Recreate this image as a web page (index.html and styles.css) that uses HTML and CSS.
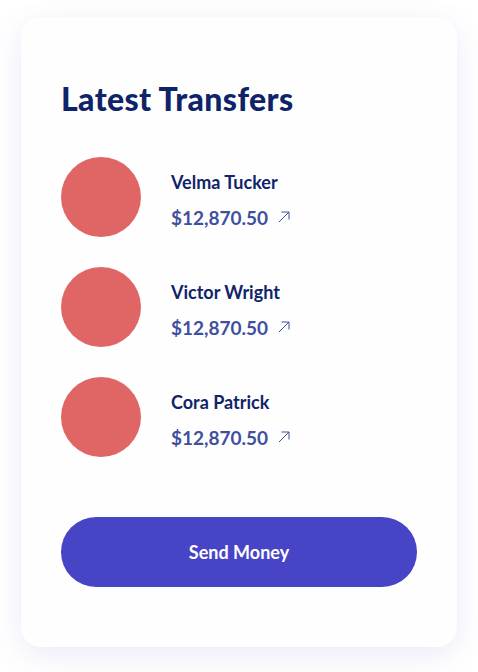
FILE: index.html
```html
<!DOCTYPE html>
<html lang="en">
<head>
<meta charset="utf-8">
<title>Latest Transfers</title>
<link rel="stylesheet" href="styles.css">
</head>
<body>
<main class="card">
  <h1 class="title">Latest Transfers</h1>
  <ul class="list">
    <li class="row">
      <span class="avatar"></span>
      <div class="info">
        <span class="name">Velma Tucker</span>
        <span class="amount">$12,870.50
          <svg class="arrow" viewBox="0 0 12 12" width="12" height="12"><path d="M1 11 L11 1 M3.5 1 H11 V8.5" fill="none" stroke="currentColor" stroke-width="1"/></svg>
        </span>
      </div>
    </li>
    <li class="row">
      <span class="avatar"></span>
      <div class="info">
        <span class="name">Victor Wright</span>
        <span class="amount">$12,870.50
          <svg class="arrow" viewBox="0 0 12 12" width="12" height="12"><path d="M1 11 L11 1 M3.5 1 H11 V8.5" fill="none" stroke="currentColor" stroke-width="1"/></svg>
        </span>
      </div>
    </li>
    <li class="row">
      <span class="avatar"></span>
      <div class="info">
        <span class="name">Cora Patrick</span>
        <span class="amount">$12,870.50
          <svg class="arrow" viewBox="0 0 12 12" width="12" height="12"><path d="M1 11 L11 1 M3.5 1 H11 V8.5" fill="none" stroke="currentColor" stroke-width="1"/></svg>
        </span>
      </div>
    </li>
  </ul>
  <button class="send" type="button">Send Money</button>
</main>
</body>
</html>
```
FILE: styles.css
```css
html, body {
  margin: 0;
  padding: 0;
  background: #ffffff;
}
body {
  font-family: "Lato", "Noto Sans", sans-serif;
  padding: 17px 21px 25px;
}
.card {
  box-sizing: border-box;
  width: 436px;
  height: 630px;
  background: #fefefe;
  border-radius: 20px;
  box-shadow: 0 8px 30px rgba(90, 80, 200, 0.12);
  padding: 62px 40px 60px;
  display: flex;
  flex-direction: column;
}
.title {
  margin: 0;
  font-size: 32px;
  line-height: 40px;
  font-weight: 900;
  color: #0f2468;
  letter-spacing: 0.4px;
}
.list {
  list-style: none;
  margin: 38px 0 0;
  padding: 0;
  display: flex;
  flex-direction: column;
  gap: 30px;
}
.row {
  display: flex;
  align-items: center;
  gap: 30px;
}
.avatar {
  width: 80px;
  height: 80px;
  border-radius: 50%;
  background: #e06666;
  flex: none;
}
.info {
  display: flex;
  flex-direction: column;
  gap: 13px;
  padding-top: 7px;
}
.name {
  font-size: 18px;
  line-height: 22px;
  font-weight: 700;
  color: #10246a;
}
.amount {
  display: flex;
  align-items: center;
  gap: 10px;
  font-size: 19px;
  line-height: 24px;
  font-weight: 700;
  color: #3f509e;
}
.arrow {
  color: #3f509e;
  margin-top: -2px;
}
.send {
  margin-top: 60px;
  height: 70px;
  width: 100%;
  border: none;
  border-radius: 35px;
  background: #4744c6;
  color: #ffffff;
  font-family: "Lato", "Noto Sans", sans-serif;
  font-size: 18px;
  font-weight: 700;
}
```
